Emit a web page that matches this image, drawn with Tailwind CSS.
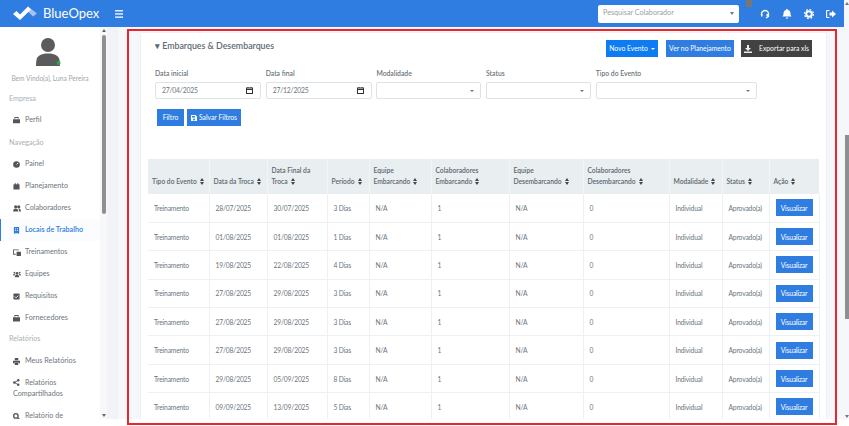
<!DOCTYPE html>
<html lang="pt-BR"><head><meta charset="utf-8"><script src="https://cdn.jsdelivr.net/npm/@tailwindcss/browser@4"></script></head>
<body class="w-[849px] h-[426px] overflow-hidden bg-white font-['Lato',sans-serif] text-[#6c757d] relative">
<header class="h-[27px] bg-[#2f7de1] flex items-center text-white">
  <div class="w-[106px] flex items-center pl-[13px] gap-[6px]">
    <svg width="24" height="16" viewBox="0 0 24 16"><path d="M0 8l3.500-3L7 8.500 15 .500l3 3L7 14z" fill="#fff"/><path d="M15 .500l9 7-4 3-5-5-1.500-1.500z" fill="#fff" opacity=".55"/></svg>
    <span class="text-[13px] leading-none">BlueOpex</span>
  </div>
  <svg class="ml-[9px]" width="8" height="8" viewBox="0 0 8 8" fill="#e6eefb"><rect width="8" height="1.500"/><rect y="3.200" width="8" height="1.500"/><rect y="6.400" width="8" height="1.500"/></svg>
  <div class="ml-[475px] w-[141px] h-[18px] bg-white rounded-[2px] flex items-center justify-between px-[5px] text-[7.200px] text-[#9aa0a6]"><span>Pesquisar Colaborador</span><span class="w-0 h-0 border-x-[2.500px] border-x-transparent border-t-[3px] border-t-[#777]"></span></div>
  <div class="ml-[7px] self-start w-[6px] h-[7px] bg-[#777]"></div>
  <div class="flex items-center ml-[8px] gap-[12px]">
    <svg width="10" height="10" viewBox="0 0 10 10" fill="none" stroke="#fff" stroke-width="1.300"><path d="M1.500 6V5a3.500 3.500 0 017 0v2.500L6 9"/><rect x="1" y="5" width="1.500" height="2.500" fill="#fff" stroke="none"/><rect x="6.500" y="5" width="2" height="2.500" fill="#fff" stroke="none"/></svg>
    <svg width="10" height="10" viewBox="0 0 10 10" fill="#fff"><path d="M5 0a1 1 0 011 1c2 .5 2.500 2 2.500 4 0 1 .5 1.500 1 2.500H.5C1 6.500 1.500 6 1.500 5c0-2 .5-3.500 2.500-4a1 1 0 011-1zM3.800 8.500h2.400a1.200 1.200 0 01-2.400 0z"/></svg>
    <svg width="10" height="10" viewBox="0 0 10 10"><circle cx="5" cy="5" r="2.800" fill="none" stroke="#fff" stroke-width="2"/><circle cx="5" cy="5" r="4.500" fill="none" stroke="#fff" stroke-width="1.200" stroke-dasharray="1.800 1.730"/></svg>
    <svg width="10" height="10" viewBox="0 0 10 10" fill="#fff"><path d="M6 1.500L10 5 6 8.500V6.500H3.500v-3H6zM3.500 1H1a1 1 0 00-1 1v6a1 1 0 001 1h2.500V8H1.200V2h2.300z"/></svg>
  </div>
</header>
<div class="flex h-[392px] overflow-hidden">
  <aside class="w-[107px] h-full bg-white shrink-0 relative overflow-hidden">
    <div class="w-[100px] text-[7.200px]">
      <div class="flex flex-col items-center pt-[11px]">
        <svg class="-ml-[5px]" width="26" height="28" viewBox="0 0 26 28" fill="#5b5b5b"><circle cx="13" cy="7" r="7"/><path d="M1 28c0-1 0-3 .5-6C2 18 6 15.500 13 15.500S24 18 24.500 22c.5 3 .5 5 .5 6z"/><circle cx="23.500" cy="25" r="2" fill="#28a745"/></svg>
        <div class="mt-[6px] text-[6.600px] text-[#a0a7ad] leading-[12px] whitespace-nowrap">Bem Vindo(a), Luna Pereira</div>
      </div>
      <div class="mt-[8px] pl-[9px] h-[14px] leading-[14px] text-[#a9afb5]">Empresa</div>
      <div class="h-[22px] mt-[3px] pl-[13px] flex items-center gap-[5px]"><svg width="7" height="7" viewBox="0 0 8 8" fill="#555"><path d="M0 2.500h8V7H0zM2.500 2V1h3v1h1V.500a.5.5 0 00-.5-.5H2a.5.5 0 00-.5.5V2z"/></svg><span>Perfil</span></div>
      <div class="mt-[5px] pl-[9px] h-[14px] leading-[14px] text-[#a9afb5]">Navegação</div>
      <div class="h-[22px] mt-[3px] pl-[13px] flex items-center gap-[5px]"><svg width="7" height="7" viewBox="0 0 8 8"><circle cx="4" cy="4" r="3.800" fill="#555"/><path d="M4 4l2-2" stroke="#fff"/></svg><span>Painel</span></div>
      <div class="h-[22px] pl-[13px] flex items-center gap-[5px]"><svg width="7" height="7" viewBox="0 0 8 8" fill="#555"><path d="M1 1.500h6a.5.5 0 01.500.5v5a.5.5 0 01-.5.5H1A.5.5 0 01.500 7V2A.5.5 0 011 1.500zM2 0h1v2H2zM5 0h1v2H5z"/></svg><span>Planejamento</span></div>
      <div class="h-[22px] pl-[13px] flex items-center gap-[4px]"><svg width="8" height="7" viewBox="0 0 9 8" fill="#555"><circle cx="3" cy="2" r="1.800"/><circle cx="6.500" cy="2" r="1.800"/><path d="M0 7.500C0 5 1.500 4 3 4s3 1 3 3.500zM6.500 4C8 4 9 5 9 7.500H7C7 6 6.500 5 6 4.300z"/></svg><span>Colaboradores</span></div>
      <div class="h-[22px] pl-[12px] flex items-center gap-[5px] font-semibold text-[#2f7de1] bg-[#fbfcfe] border-l-[1px] border-[#2f7de1]"><svg width="7" height="7" viewBox="0 0 8 8" fill="#2f7de1"><path d="M1 0h6v8L5.500 7h-3L1 8zM2.500 1.500v1h1v-1zM4.500 1.500v1h1v-1zM2.500 3.500v1h1v-1zM4.500 3.500v1h1v-1z" fill-rule="evenodd"/></svg><span>Locais de Trabalho</span></div>
      <div class="h-[22px] pl-[13px] flex items-center gap-[4px]"><svg width="8" height="7" viewBox="0 0 9 8" fill="#555"><path d="M0 .5h6.500v1H1v4h2v1H0zM4 3h5v5H4z"/></svg><span>Treinamentos</span></div>
      <div class="h-[22px] pl-[13px] flex items-center gap-[4px]"><svg width="8" height="7" viewBox="0 0 9 8" fill="#555"><circle cx="4.500" cy="2.500" r="1.500"/><circle cx="1.500" cy="1.800" r="1"/><circle cx="7.500" cy="1.800" r="1"/><path d="M2 7c0-2 1-3 2.500-3S7 5 7 7zM0 5c0-1 .5-2 1.500-2l1 .3L1.500 5zM9 5c0-1-.5-2-1.500-2l-1 .3L7.500 5z"/></svg><span>Equipes</span></div>
      <div class="h-[22px] pl-[13px] flex items-center gap-[5px]"><svg width="7" height="7" viewBox="0 0 8 8"><rect x=".5" y=".5" width="7" height="7" rx="1" fill="#555"/><path d="M2 4l1.500 1.500L6 3" stroke="#fff" fill="none"/></svg><span>Requisitos</span></div>
      <div class="h-[22px] pl-[13px] flex items-center gap-[5px]"><svg width="7" height="7" viewBox="0 0 8 8" fill="#555"><path d="M0 2.500h8V7.500H0zM2.500 2V1h3v1h1V.500a.5.5 0 00-.5-.5H2a.5.5 0 00-.5.5V2z"/></svg><span>Fornecedores</span></div>
      <div class="mt-[3px] pl-[9px] h-[14px] leading-[14px] text-[#a9afb5]">Relatórios</div>
      <div class="h-[22px] mt-[4px] pl-[13px] flex items-center gap-[5px]"><svg width="7" height="7" viewBox="0 0 8 8" fill="#555"><path d="M2 0h4v2.500H2zM0 3h8v3H6.500V5h-5v1H0zM2 5.500h4V8H2z"/></svg><span>Meus Relatórios</span></div>
      <div class="pl-[13px] pt-[5px] h-[33px] leading-[11px]"><svg class="inline-block mr-[5px] align-[-1px]" width="7" height="7" viewBox="0 0 8 8" fill="#555"><circle cx="1.500" cy="4" r="1.400"/><circle cx="6" cy="1.500" r="1.400"/><circle cx="6" cy="6.500" r="1.400"/><path d="M1.500 4L6 1.500M1.500 4L6 6.500" stroke="#555"/></svg>Relatórios Compartilhados</div>
      <div class="h-[22px] pl-[13px] flex items-center gap-[5px]"><svg width="7" height="7" viewBox="0 0 8 8"><circle cx="3.300" cy="3.300" r="2.500" fill="none" stroke="#555" stroke-width="1.500"/><path d="M5 5l2.500 2.500" stroke="#555" stroke-width="1.500"/></svg><span>Relatório de</span></div>
    </div>
    <div class="absolute top-0 right-0 w-[7px] h-full bg-[#f8f8f8]">
      <div class="mx-auto mt-[2px] w-0 h-0 border-x-[2px] border-x-transparent border-b-[3px] border-b-[#666]"></div>
      <div class="mx-auto mt-[3px] w-[4px] h-[179px] rounded-[2px] bg-[#8f8f8f]"></div>
      <div class="absolute bottom-[2px] left-[1.500px] w-0 h-0 border-x-[2px] border-x-transparent border-t-[3px] border-t-[#666]"></div>
    </div>
  </aside>
  <main class="flex-1 min-w-0 bg-[#f6f7fb] border-l-[11px] border-[#f1f3f7] pl-[22px] pr-[22px] pt-[5px] overflow-hidden">
    <section class="w-[687px] h-[400px] bg-white border border-[#edf0f4] rounded-[2px]">
      <div class="flex items-start justify-between pl-[14px] pr-[14px] pt-[7px]">
        <h2 class="text-[8.800px] leading-[12px] font-semibold text-[#606a73]">▾ Embarques &amp; Desembarques</h2>
        <div class="flex gap-[7px] text-[6.800px] text-white whitespace-nowrap">
          <button class="mr-[1px] w-[52px] h-[17px] bg-[#0d7cf2] flex items-center justify-center gap-[3px]">Novo Evento <span class="w-0 h-0 border-x-[2px] border-x-transparent border-t-[2px] border-t-white"></span></button>
          <button class="w-[68px] h-[17px] bg-[#2f7de1]">Ver no Planejamento</button>
          <button class="w-[71px] h-[17px] bg-[#424242] flex items-center justify-center gap-[7px]"><svg width="8" height="8" viewBox="0 0 8 8" fill="#eee"><path d="M3 0h2v3h2L4 6 1 3h2zM0 6.500h8V8H0z"/></svg>Exportar para xls</button>
        </div>
      </div>
      <div class="flex gap-[4.700px] pl-[14px] mt-[12px] text-[6.800px] font-semibold">
        <label class="block w-[106px]"><span class="block h-[9px] mb-[4px] leading-[9px]">Data inicial</span><span class="h-[17px] border border-[#dfe3e8] rounded-[2px] flex items-center justify-between pl-[6px] pr-[7px] font-normal tracking-[-0.2px]"><span>27/04/2025</span><svg width="7" height="7" viewBox="0 0 7 7" fill="none" stroke="#333"><rect x=".5" y="1" width="6" height="5.500"/><path d="M0 2.500h7M2 0v1M5 0v1"/></svg></span></label>
        <label class="block w-[106px]"><span class="block h-[9px] mb-[4px] leading-[9px]">Data final</span><span class="h-[17px] border border-[#dfe3e8] rounded-[2px] flex items-center justify-between pl-[6px] pr-[7px] font-normal tracking-[-0.2px]"><span>27/12/2025</span><svg width="7" height="7" viewBox="0 0 7 7" fill="none" stroke="#333"><rect x=".5" y="1" width="6" height="5.500"/><path d="M0 2.500h7M2 0v1M5 0v1"/></svg></span></label>
        <label class="block w-[105px]"><span class="block h-[9px] mb-[4px] leading-[9px]">Modalidade</span><span class="h-[17px] border border-[#dfe3e8] rounded-[2px] flex items-center justify-end px-[6px]"><span class="w-0 h-0 border-x-[2px] border-x-transparent border-t-[2.500px] border-t-[#777]"></span></span></label>
        <label class="block w-[105px]"><span class="block h-[9px] mb-[4px] leading-[9px]">Status</span><span class="h-[17px] border border-[#dfe3e8] rounded-[2px] flex items-center justify-end px-[6px]"><span class="w-0 h-0 border-x-[2px] border-x-transparent border-t-[2.500px] border-t-[#777]"></span></span></label>
        <label class="block w-[161px]"><span class="block h-[9px] mb-[4px] leading-[9px]">Tipo do Evento</span><span class="h-[17px] border border-[#dfe3e8] rounded-[2px] flex items-center justify-end px-[6px]"><span class="w-0 h-0 border-x-[2px] border-x-transparent border-t-[2.500px] border-t-[#777]"></span></span></label>
      </div>
      <div class="flex gap-[3px] pl-[16px] mt-[10px] text-[6.800px] text-white">
        <button class="w-[27px] h-[17px] bg-[#2f7de1]">Filtro</button>
        <button class="w-[54px] h-[17px] bg-[#2f7de1] flex items-center justify-center gap-[2px]"><svg width="6" height="6" viewBox="0 0 6 6" fill="#fff"><path d="M0 0h4.500L6 1.500V6H0zM1 1v1.500h3V1zM3 3.500a1 1 0 100 2 1 1 0 000-2z" fill-rule="evenodd"/></svg>Salvar Filtros</button>
      </div>
      <table class="ml-[7px] mt-[33px] w-[671px] table-fixed border-collapse text-[6.700px]">
        <colgroup><col class="w-[61px]"><col class="w-[58px]"><col class="w-[60px]"><col class="w-[42px]"><col class="w-[62px]"><col class="w-[78px]"><col class="w-[74px]"><col class="w-[86px]"><col class="w-[53px]"><col class="w-[47px]"><col class="w-[50px]"></colgroup>
        <thead class="bg-[#e9eef1] text-[#5a6670]">
          <tr class="h-[35px] [&_th]:border-r [&_th]:border-[#f2f5f7] [&_th]:px-[4px] [&_th]:pb-[7px] [&_th]:align-bottom [&_th]:text-left [&_th]:font-semibold [&_th]:leading-[11px] [&_svg]:inline-block [&_svg]:ml-[3px] [&_svg]:align-[-1px]">
            <th class="whitespace-nowrap">Tipo do Evento<svg width="4" height="7" viewBox="0 0 4 7" fill="#444"><path d="M2 0l2 3H0zM2 7L0 4h4z"/></svg></th>
            <th class="whitespace-nowrap">Data da Troca<svg width="4" height="7" viewBox="0 0 4 7" fill="#444"><path d="M2 0l2 3H0zM2 7L0 4h4z"/></svg></th>
            <th>Data Final da Troca<svg width="4" height="7" viewBox="0 0 4 7" fill="#444"><path d="M2 0l2 3H0zM2 7L0 4h4z"/></svg></th>
            <th class="whitespace-nowrap">Período<svg width="4" height="7" viewBox="0 0 4 7" fill="#444"><path d="M2 0l2 3H0zM2 7L0 4h4z"/></svg></th>
            <th>Equipe Embarcando<svg width="4" height="7" viewBox="0 0 4 7" fill="#444"><path d="M2 0l2 3H0zM2 7L0 4h4z"/></svg></th>
            <th>Colaboradores Embarcando<svg width="4" height="7" viewBox="0 0 4 7" fill="#444"><path d="M2 0l2 3H0zM2 7L0 4h4z"/></svg></th>
            <th>Equipe Desembarcando<svg width="4" height="7" viewBox="0 0 4 7" fill="#444"><path d="M2 0l2 3H0zM2 7L0 4h4z"/></svg></th>
            <th>Colaboradores Desembarcando<svg width="4" height="7" viewBox="0 0 4 7" fill="#444"><path d="M2 0l2 3H0zM2 7L0 4h4z"/></svg></th>
            <th class="whitespace-nowrap">Modalidade<svg width="4" height="7" viewBox="0 0 4 7" fill="#444"><path d="M2 0l2 3H0zM2 7L0 4h4z"/></svg></th>
            <th class="whitespace-nowrap">Status<svg width="4" height="7" viewBox="0 0 4 7" fill="#444"><path d="M2 0l2 3H0zM2 7L0 4h4z"/></svg></th>
            <th class="whitespace-nowrap !border-r-0">Ação<svg width="4" height="7" viewBox="0 0 4 7" fill="#444"><path d="M2 0l2 3H0zM2 7L0 4h4z"/></svg></th>
          </tr>
        </thead>
        <tbody class="[&_tr]:h-[28.400px] [&_tr]:border-b [&_tr]:border-[#eef1f4] [&_td]:border-r [&_td]:border-[#eef1f4] [&_td]:pl-[6px] [&_td]:tracking-[-0.15px] [&_button]:w-[37px] [&_button]:h-[17px] [&_button]:bg-[#2f7de1] [&_button]:text-white [&_button]:block">
          <tr><td>Treinamento</td><td>28/07/2025</td><td>30/07/2025</td><td>3 Dias</td><td>N/A</td><td>1</td><td>N/A</td><td>0</td><td>Individual</td><td>Aprovado(a)</td><td><button>Visualizar</button></td></tr>
          <tr><td>Treinamento</td><td>01/08/2025</td><td>01/08/2025</td><td>1 Dias</td><td>N/A</td><td>1</td><td>N/A</td><td>0</td><td>Individual</td><td>Aprovado(a)</td><td><button>Visualizar</button></td></tr>
          <tr><td>Treinamento</td><td>19/08/2025</td><td>22/08/2025</td><td>4 Dias</td><td>N/A</td><td>1</td><td>N/A</td><td>0</td><td>Individual</td><td>Aprovado(a)</td><td><button>Visualizar</button></td></tr>
          <tr><td>Treinamento</td><td>27/08/2025</td><td>29/08/2025</td><td>3 Dias</td><td>N/A</td><td>1</td><td>N/A</td><td>0</td><td>Individual</td><td>Aprovado(a)</td><td><button>Visualizar</button></td></tr>
          <tr><td>Treinamento</td><td>27/08/2025</td><td>29/08/2025</td><td>3 Dias</td><td>N/A</td><td>1</td><td>N/A</td><td>0</td><td>Individual</td><td>Aprovado(a)</td><td><button>Visualizar</button></td></tr>
          <tr><td>Treinamento</td><td>27/08/2025</td><td>29/08/2025</td><td>3 Dias</td><td>N/A</td><td>1</td><td>N/A</td><td>0</td><td>Individual</td><td>Aprovado(a)</td><td><button>Visualizar</button></td></tr>
          <tr><td>Treinamento</td><td>29/08/2025</td><td>05/09/2025</td><td>8 Dias</td><td>N/A</td><td>1</td><td>N/A</td><td>0</td><td>Individual</td><td>Aprovado(a)</td><td><button>Visualizar</button></td></tr>
          <tr><td>Treinamento</td><td>09/09/2025</td><td>13/09/2025</td><td>5 Dias</td><td>N/A</td><td>1</td><td>N/A</td><td>0</td><td>Individual</td><td>Aprovado(a)</td><td><button>Visualizar</button></td></tr>
        </tbody>
      </table>
    </section>
  </main>
</div>
<div class="absolute left-[127px] top-[29px] w-[710px] h-[396px] border-2 border-[#e8262b] pointer-events-none"></div>
<div class="absolute right-0 top-0 w-[5px] h-[419px] bg-[#f6f7fb]"><div class="mx-auto mt-[2px] w-0 h-0 border-x-[2px] border-x-transparent border-b-[3px] border-b-[#777]"></div><div class="mt-[130px] w-[4px] ml-[1px] h-[184px] bg-[#8f8f8f]"></div><div class="absolute bottom-[1px] left-[0.500px] w-0 h-0 border-x-[2px] border-x-transparent border-t-[3px] border-t-[#777]"></div></div>
</body></html>
